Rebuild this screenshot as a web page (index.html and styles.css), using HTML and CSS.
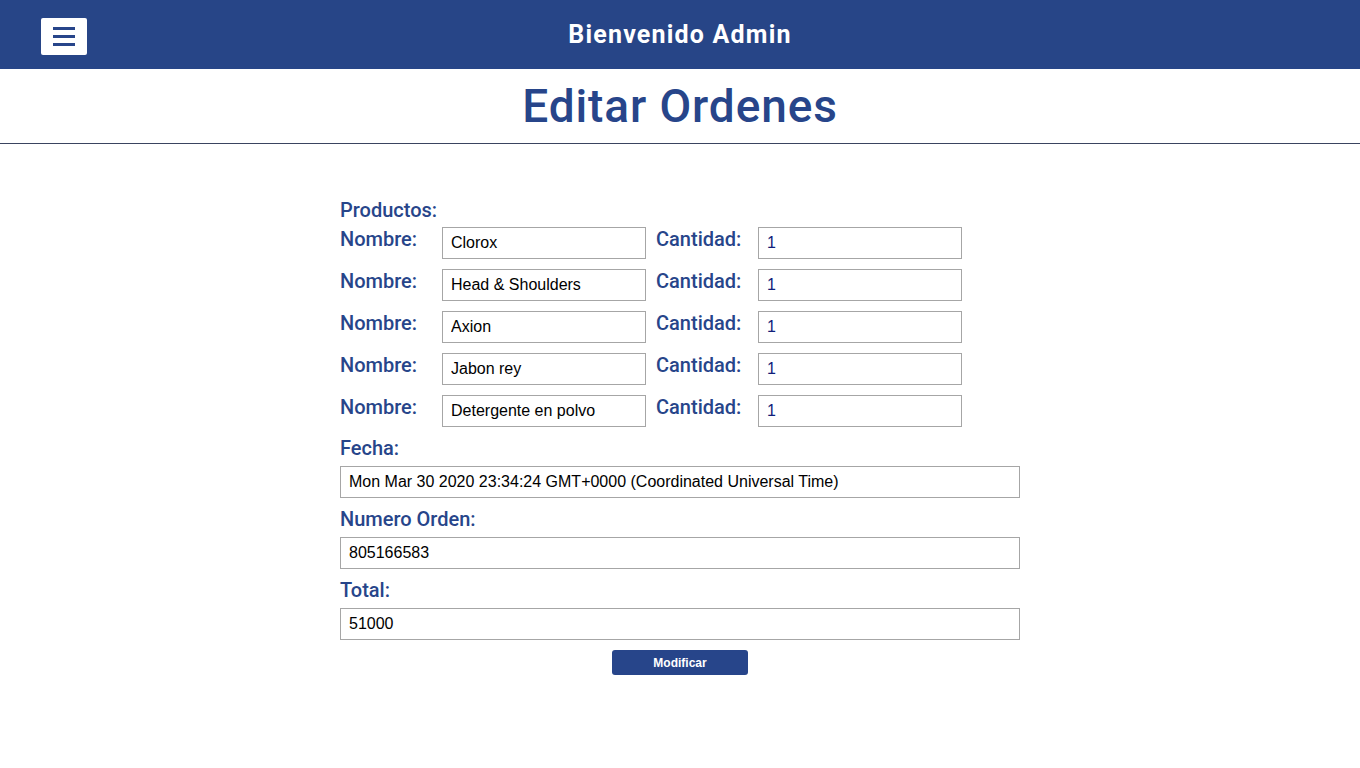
FILE: index.html
```html
<!DOCTYPE html>
<html lang="es">
<head>
<meta charset="utf-8">
<title>Editar Ordenes</title>
<link rel="stylesheet" href="styles.css">
</head>
<body>
<header class="topbar">
  <button class="menu-btn" aria-label="Menú">
    <svg width="22" height="19" viewBox="0 0 22 19"><rect x="0" y="0" width="22" height="3" fill="#27458a"/><rect x="0" y="8" width="22" height="3" fill="#27458a"/><rect x="0" y="16" width="22" height="3" fill="#27458a"/></svg>
  </button>
  <h1 class="welcome">Bienvenido Admin</h1>
</header>
<div class="page-title">
  <h2>Editar Ordenes</h2>
</div>
<main class="content">
  <form class="order-form">
    <label class="field-label first">Productos:</label>
    <div class="product-row">
      <span class="row-label">Nombre:</span><input class="inp" value="Clorox">
      <span class="row-label qty-label">Cantidad:</span><input class="inp qty" value="1">
    </div>
    <div class="product-row">
      <span class="row-label">Nombre:</span><input class="inp" value="Head &amp; Shoulders">
      <span class="row-label qty-label">Cantidad:</span><input class="inp qty" value="1">
    </div>
    <div class="product-row">
      <span class="row-label">Nombre:</span><input class="inp" value="Axion">
      <span class="row-label qty-label">Cantidad:</span><input class="inp qty" value="1">
    </div>
    <div class="product-row">
      <span class="row-label">Nombre:</span><input class="inp" value="Jabon rey">
      <span class="row-label qty-label">Cantidad:</span><input class="inp qty" value="1">
    </div>
    <div class="product-row">
      <span class="row-label">Nombre:</span><input class="inp" value="Detergente en polvo">
      <span class="row-label qty-label">Cantidad:</span><input class="inp qty" value="1">
    </div>
    <label class="field-label">Fecha:</label>
    <input class="inp wide" value="Mon Mar 30 2020 23:34:24 GMT+0000 (Coordinated Universal Time)">
    <label class="field-label">Numero Orden:</label>
    <input class="inp wide" value="805166583">
    <label class="field-label">Total:</label>
    <input class="inp wide" value="51000">
    <div class="actions">
      <button type="button" class="submit-btn">Modificar</button>
    </div>
  </form>
</main>
</body>
</html>
```
FILE: styles.css
```css
* { box-sizing: border-box; }
body {
  margin: 0;
  font-family: Roboto, "Liberation Sans", sans-serif;
  background: #fff;
}
.topbar {
  height: 69px;
  background: #274587;
  display: flex;
  align-items: center;
  position: relative;
  padding-left: 41px;
}
.menu-btn {
  width: 46px;
  height: 37px;
  background: #fff;
  border: none;
  border-radius: 2px;
  padding: 0;
  display: flex;
  align-items: center;
  justify-content: center;
  margin-top: 4px;
}
.welcome {
  position: absolute;
  left: 0;
  right: 0;
  margin: 0;
  text-align: center;
  color: #fff;
  font-size: 25px;
  font-weight: 700;
  letter-spacing: 1.2px;
  pointer-events: none;
  top: 20px;
  line-height: 30px;
}
.page-title {
  border-bottom: 1px solid #3a4460;
  height: 75px;
  display: flex;
  justify-content: center;
}
.page-title h2 {
  margin: 0;
  color: #27458a;
  font-size: 46px;
  font-weight: 500;
  line-height: 75px;
  letter-spacing: 0.9px;
}
.content {
  display: flex;
  justify-content: center;
  padding-top: 55px;
}
.order-form {
  width: 680px;
  display: flex;
  flex-direction: column;
}
.field-label {
  color: #27458a;
  font-size: 20px;
  font-weight: 500;
  line-height: 22px;
  height: 22px;
  margin-bottom: 7px;
}
.field-label.first { margin-bottom: 6px; }
.product-row {
  display: flex;
  align-items: flex-start;
  margin-bottom: 10px;
}
.row-label {
  width: 102px;
  color: #27458a;
  font-size: 20px;
  font-weight: 500;
  line-height: 22px;
  padding-top: 1px;
}
.qty-label { margin-left: 10px; }
.inp {
  width: 204px;
  height: 32px;
  border: 1px solid #a6a6a6;
  padding: 0 8px;
  font-family: "Liberation Sans", Arial, sans-serif;
  font-size: 16px;
  color: #000;
  background: #fff;
  outline: none;
}
.inp.qty { color: #10207a; }
.inp.wide {
  width: 680px;
  margin-bottom: 10px;
}
.actions {
  display: flex;
  justify-content: center;
}
.submit-btn {
  width: 136px;
  height: 25px;
  background: #27458a;
  color: #fff;
  border: none;
  border-radius: 3px;
  font-family: "Liberation Sans", Arial, sans-serif;
  font-weight: 700;
  font-size: 12px;
  padding: 0;
}
```
